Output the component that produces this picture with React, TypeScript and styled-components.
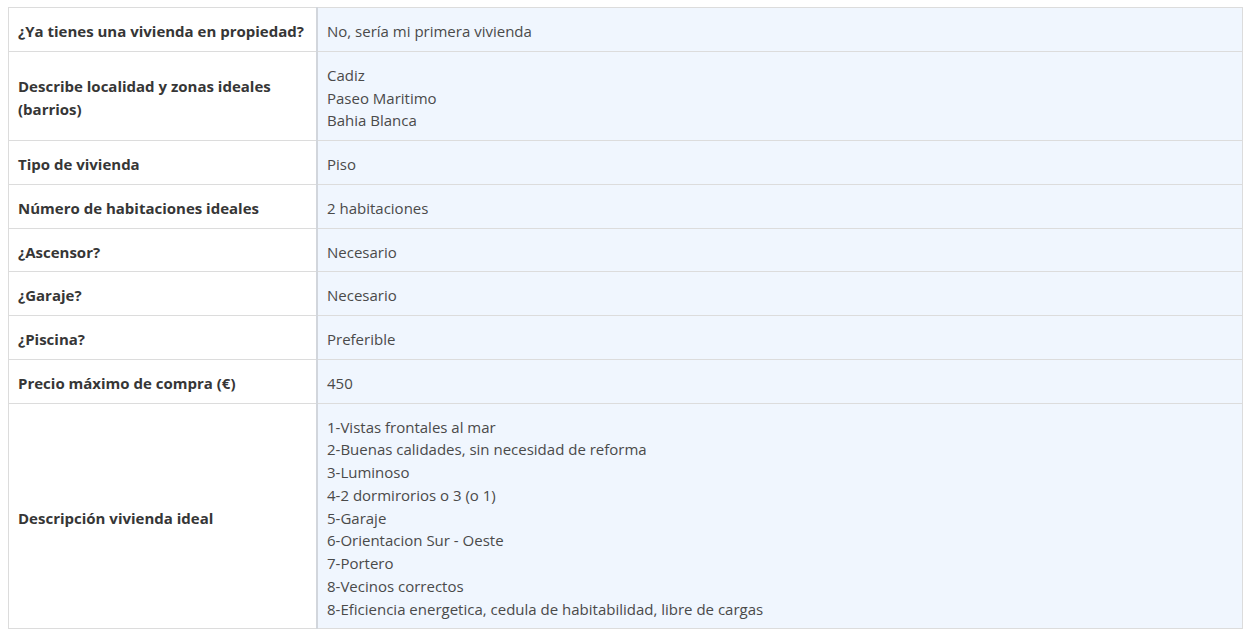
import styled, { createGlobalStyle } from "styled-components";

const GlobalStyle = createGlobalStyle`
  html, body {
    margin: 0;
    padding: 0;
    background: #ffffff;
  }
`;

type Row = { label: string; value: string[] };

const rows: Row[] = [
  { label: "¿Ya tienes una vivienda en propiedad?", value: ["No, sería mi primera vivienda"] },
  {
    label: "Describe localidad y zonas ideales (barrios)",
    value: ["Cadiz", "Paseo Maritimo", "Bahia Blanca"],
  },
  { label: "Tipo de vivienda", value: ["Piso"] },
  { label: "Número de habitaciones ideales", value: ["2 habitaciones"] },
  { label: "¿Ascensor?", value: ["Necesario"] },
  { label: "¿Garaje?", value: ["Necesario"] },
  { label: "¿Piscina?", value: ["Preferible"] },
  { label: "Precio máximo de compra (€)", value: ["450"] },
  {
    label: "Descripción vivienda ideal",
    value: [
      "1-Vistas frontales al mar",
      "2-Buenas calidades, sin necesidad de reforma",
      "3-Luminoso",
      "4-2 dormirorios o 3 (o 1)",
      "5-Garaje",
      "6-Orientacion Sur - Oeste",
      "7-Portero",
      "8-Vecinos correctos",
      "8-Eficiencia energetica, cedula de habitabilidad, libre de cargas",
    ],
  },
];

export default function App() {
  return (
    <>
      <GlobalStyle />
      <Page>
        <Table>
          <tbody>
            {rows.map((row) => (
              <tr key={row.label}>
                <Label>{row.label}</Label>
                <Value>
                  {row.value.map((line, i) => (
                    <Line key={i}>{line}</Line>
                  ))}
                </Value>
              </tr>
            ))}
          </tbody>
        </Table>
      </Page>
    </>
  );
}

const Page = styled.div`
  padding: 7px 5px 0 8px;
  font-family: "Open Sans", "Noto Sans", sans-serif;
  font-size: 15px;
`;

const Table = styled.table`
  width: 1235px;
  border-collapse: collapse;
  border: 1px solid #dcdcdc;
`;

const Label = styled.th`
  width: 288px;
  padding: 12px 10px 8px 9px;
  text-align: left;
  vertical-align: middle;
  font-weight: 700;
  color: #363636;
  line-height: 22.75px;
  background: #ffffff;
  border-top: 1px solid #dcdcdc;
  border-right: 2px solid #d2d6dc;
`;

const Value = styled.td`
  padding: 12px 10px 8px 9px;
  vertical-align: middle;
  color: #4a4a4a;
  line-height: 22.75px;
  background: #f0f6fe;
  border-top: 1px solid #dcdcdc;
`;

const Line = styled.div``;
